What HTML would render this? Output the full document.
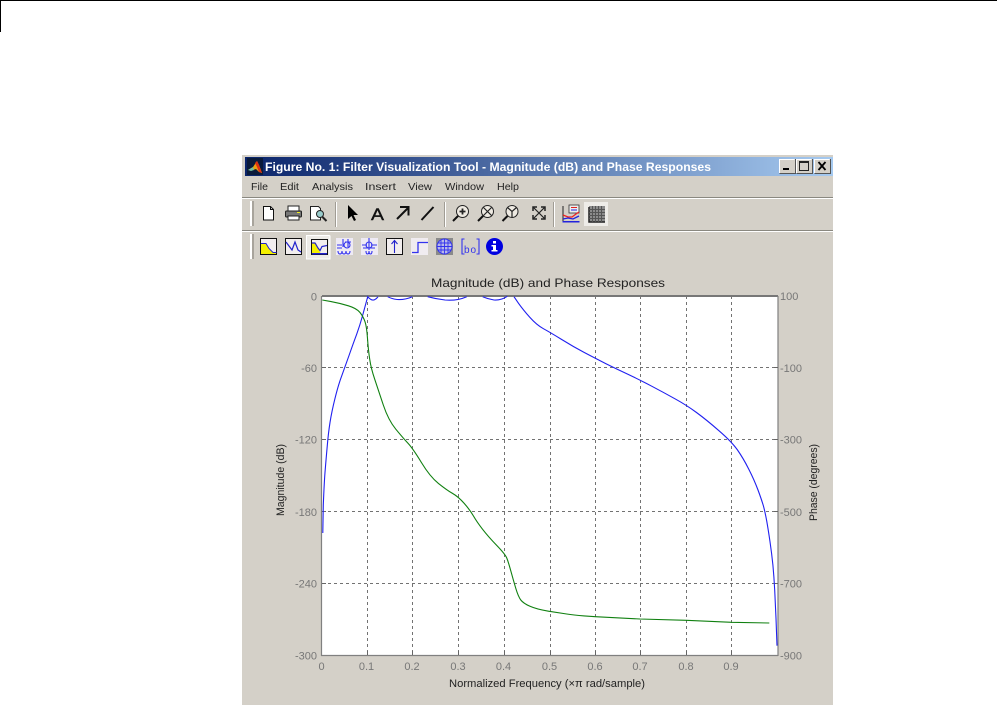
<!DOCTYPE html>
<html><head><meta charset="utf-8"><title>Filter Visualization Tool</title>
<style>html,body{margin:0;padding:0;background:#fff;width:997px;height:705px;overflow:hidden}svg{display:block}
text{font-family:"Liberation Sans",sans-serif}</style></head><body>
<svg width="997" height="705" viewBox="0 0 997 705" xmlns="http://www.w3.org/2000/svg">
<defs><linearGradient id="tb" x1="0" x2="1" y1="0" y2="0"><stop offset="0" stop-color="#0a246a"/><stop offset="1" stop-color="#a6caf0"/></linearGradient></defs>
<rect x="0" y="0" width="997" height="1" fill="#000"/>
<rect x="0" y="0" width="1" height="32" fill="#000"/>
<!-- window -->
<rect x="242" y="155" width="591" height="550" fill="#d4d0c8"/>
<rect x="245" y="157" width="588" height="19" fill="url(#tb)"/>
<!-- title icon -->
<rect x="247" y="158" width="16" height="17" fill="#0a1a3a"/>
<path d="M248 170l5-3 4-6 2 4 3 8-3-1-3-3-3 1z" fill="#e8a010"/>
<path d="M255 163l2-2 2 4 3 8-3-1-2-5z" fill="#e03010"/>
<path d="M248 170l5-3 1 3-3 1z" fill="#70c0a0"/>
<text x="265" y="171" font-size="11.500" font-weight="bold" fill="#fff" textLength="446" lengthAdjust="spacingAndGlyphs">Figure No. 1: Filter Visualization Tool - Magnitude (dB) and Phase Responses</text>
<!-- window buttons -->
<g>
<rect x="779" y="159" width="16" height="14" fill="#d4d0c8"/>
<path d="M779.500 173v-13.500h15" fill="none" stroke="#fff"/><path d="M795.500 159v14.500h-16" fill="none" stroke="#555"/>
<rect x="783" y="168" width="6" height="2" fill="#000"/>
<rect x="796" y="159" width="16" height="14" fill="#d4d0c8"/>
<path d="M796.500 173v-13.500h15" fill="none" stroke="#fff"/><path d="M812.500 159v14.500h-16" fill="none" stroke="#555"/>
<path d="M799.500 161.500h9v9h-9z M799 162.500h10" fill="none" stroke="#222"/>
<rect x="814" y="159" width="16" height="14" fill="#d4d0c8"/>
<path d="M814.500 173v-13.500h15" fill="none" stroke="#fff"/><path d="M830.500 159v14.500h-16" fill="none" stroke="#555"/>
<path d="M818.500 162l7 8M825.500 162l-7 8" stroke="#000" stroke-width="1.800" fill="none"/>
</g>
<!-- menu -->
<g font-size="10.500" fill="#222">
<text x="251" y="190" textLength="17" lengthAdjust="spacingAndGlyphs">File</text>
<text x="280" y="190" textLength="19" lengthAdjust="spacingAndGlyphs">Edit</text>
<text x="312" y="190" textLength="41" lengthAdjust="spacingAndGlyphs">Analysis</text>
<text x="365" y="190" textLength="31" lengthAdjust="spacingAndGlyphs">Insert</text>
<text x="408" y="190" textLength="24" lengthAdjust="spacingAndGlyphs">View</text>
<text x="445" y="190" textLength="39" lengthAdjust="spacingAndGlyphs">Window</text>
<text x="497" y="190" textLength="22" lengthAdjust="spacingAndGlyphs">Help</text>
</g>
<!-- toolbar separators -->
<rect x="242" y="197" width="591" height="1" fill="#8a8880"/><rect x="242" y="198" width="591" height="1" fill="#fff"/>
<rect x="242" y="230" width="591" height="1" fill="#8a8880"/><rect x="242" y="231" width="591" height="1" fill="#fff"/>
<!-- grips -->
<g><rect x="250" y="201" width="2" height="25" fill="#fff"/><rect x="252" y="201" width="2" height="25" fill="#a8a49c"/>
<rect x="250" y="234" width="2" height="25" fill="#fff"/><rect x="252" y="234" width="2" height="25" fill="#a8a49c"/></g>
<g><rect x="335" y="202" width="1" height="25" fill="#a09c94"/><rect x="336" y="202" width="1" height="25" fill="#fff"/>
<rect x="444" y="202" width="1" height="25" fill="#a09c94"/><rect x="445" y="202" width="1" height="25" fill="#fff"/>
<rect x="553" y="202" width="1" height="25" fill="#a09c94"/><rect x="554" y="202" width="1" height="25" fill="#fff"/></g>
<!-- toolbar 1 icons -->
<path d="M263.500 206.500h7l3 3v10.500h-10z" fill="#fff" stroke="#111"/><path d="M270.500 206.500v3h3" fill="none" stroke="#111"/>
<g><rect x="288" y="206" width="11" height="5" fill="#fff" stroke="#222"/><rect x="285.500" y="211" width="16" height="6" rx="1" fill="#777" stroke="#222"/><rect x="288" y="216" width="11" height="4" fill="#fff" stroke="#222"/><rect x="297" y="212" width="3" height="1" fill="#ee2"/></g>
<path d="M310.500 206.500h8l2 2v11.500h-10z" fill="#fff" stroke="#222"/><circle cx="320" cy="214" r="3.500" fill="#9cc" stroke="#222"/><path d="M322.500 217l4 4" stroke="#222" stroke-width="2"/>
<path d="M348 205v14l3.500-3 2.500 5 2-1-2.500-5h4.500z" fill="#000"/>
<text x="371" y="220" font-size="17" fill="#111" stroke="#111" stroke-width=".4" textLength="13" lengthAdjust="spacingAndGlyphs">A</text>
<path d="M397 219l11-11M400 207h8.500v8.500" fill="none" stroke="#111" stroke-width="2"/>
<path d="M421.500 220l12-13" stroke="#111" stroke-width="2"/>
<g fill="#eeeae2" stroke="#222"><circle cx="462.500" cy="211.500" r="6"/><circle cx="487.500" cy="211.500" r="6"/><circle cx="512" cy="211.500" r="6"/></g>
<g fill="none" stroke="#111" stroke-width="2"><path d="M458 216l-5 5M483 216l-5 5M507.500 216l-5 5"/></g>
<g fill="none" stroke="#222" stroke-width="1.200"><path d="M459.500 211.500h6M462.500 208.500v6" stroke-width="1.800"/><path d="M483.500 207.500l8 8M491.500 207.500l-8 8"/><path d="M507.500 207.500l4.500 4 4.500-4M512 211.500v6"/>
<path d="M533 207l12 12M545 207l-12 12"/><path d="M533 211v-4h4M541 207h4v4M545 215v4h-4M537 219h-4v-4" stroke-width="1.500"/></g>
<g><rect x="562.500" y="206" width="1" height="16" fill="#222"/><rect x="562.500" y="221" width="17" height="1.500" fill="#22d"/><rect x="569" y="205" width="10" height="8" fill="#eee" stroke="#333" stroke-width=".8"/><path d="M571 207.500h6" stroke="#d22"/><path d="M571 210h6" stroke="#22d"/><path d="M563 215l5 2 4 0 4-3 3-2" stroke="#e22" stroke-width="1.300" fill="none"/><path d="M563 219l5-1 5 1 6-3" stroke="#22d" stroke-width="1.300" fill="none"/></g>
<g><rect x="584" y="202" width="24" height="24" fill="#eeece8"/><rect x="589" y="206" width="16" height="16" fill="#8c8c8c"/><path d="M589 207v15h16" fill="none" stroke="#222" stroke-width="1.500"/><path d="M589 209.500h16M589 212.500h16M589 215.500h16M589 218.500h16M592.500 206v16M595.500 206v16M598.500 206v16M601.500 206v16" stroke="#555" stroke-width="1"/></g>
<!-- toolbar 2 icons -->
<g>
<rect x="260.500" y="238.500" width="16" height="16" fill="#f2eeee" stroke="#111"/><path d="M261 244h5l3 5 4 4h3v1h-15z" fill="#f4f000"/><path d="M261 243.500h5l3 5 4 4h3.500" fill="none" stroke="#22c"/>
<rect x="285.500" y="238.500" width="16" height="16" fill="#f2eeee" stroke="#111"/><path d="M286 242l6 8 3-8 3 8 3 2" fill="none" stroke="#22c" stroke-width="1.200"/>
<rect x="306" y="235" width="24" height="24" fill="#eeece8"/><path d="M306.500 259v-23.500h23M330 235.500v23.500h-24" fill="none" stroke="#fff"/>
<rect x="311.500" y="239.500" width="16" height="15" fill="#f2eeee" stroke="#111"/><path d="M312 243h4l3 7 2 4h-9z" fill="#f4f000"/><path d="M312 243h3l3 5 2 2.500 2-4 5-1" fill="none" stroke="#22c" stroke-width="1.200"/><rect x="312" y="253" width="15" height="1.500" fill="#22c"/>
<rect x="336" y="238" width="17" height="17" fill="#eeeaf4"/><path d="M337 245h5M337 248h5M343 239v8M348 239v8M345 242h6M338 251c0 4 4 4 4 0c0 4 4 4 4 0c0 4 4 4 4 0M344 245a2 2 0 1 0 6 0a2 2 0 1 0-6 0" fill="none" stroke="#33e" stroke-width="1.100"/>
<rect x="361" y="238" width="17" height="17" fill="#eeeaf4"/><path d="M362 245h5M369 238v12M366 245a3 3 0 1 0 6 0a3 3 0 1 0-6 0M371 245h6M363 248h12M366 251c0 4 3 4 3 0c0 4 3 4 3 0" fill="none" stroke="#33e" stroke-width="1.100"/>
<rect x="386.500" y="238.500" width="16" height="16" fill="#f2eeee" stroke="#111"/><path d="M394.500 253v-12M391.500 244l3-3.500 3 3.500" fill="none" stroke="#22c" stroke-width="1.100"/>
<rect x="411" y="238" width="17" height="17" fill="#f0ecf0"/><path d="M412 252.500h6v-10h10" fill="none" stroke="#33e" stroke-width="1.300"/>
<rect x="436" y="238" width="17" height="17" fill="#8a8a8a"/><circle cx="444.500" cy="246.500" r="7.500" fill="#b8b8e8" stroke="#33e"/><path d="M437 246.500h15M444.500 239v15M441 240v13M448 240v13M438 243h13M438 250h13" stroke="#33e" stroke-width=".9" fill="none"/>
<path d="M464.500 239h-2.500v15h2.500M476.500 239h2.500v15h-2.500" fill="none" stroke="#33e" stroke-width="1.100"/><text x="464" y="253" font-size="10" fill="#33e" textLength="12">bo</text>
<circle cx="494.500" cy="246.500" r="8.500" fill="#0000e0"/><rect x="493" y="241" width="3" height="2.500" fill="#fff"/><path d="M491.500 245h4.500v5h1.500v1.500h-6v-1.500h1.500v-3.500h-1.500z" fill="#fff"/>
</g>
<!-- plot -->
<rect x="322" y="296" width="456" height="360" fill="#fff"/>
<g stroke="#444" stroke-width="1" stroke-dasharray="3 3" fill="none" shape-rendering="crispEdges" opacity=".75">
<path d="M367.500 296V655M412.500 296V655M458.500 296V655M504.500 296V655M550.500 296V655M595.500 296V655M640.500 296V655M686.500 296V655M731.500 296V655"/>
<path d="M322 367.500H778M322 439.500H778M322 511.500H778M322 583.500H778"/>
</g>
<path d="M322 296.500H778M322 295.500H778" stroke="#777" stroke-width="1" fill="none"/>
<path d="M321.500 296V656M778 296V656M321 655.500H778" stroke="#808080" stroke-width="1.200" fill="none"/>
<!-- ticks -->
<path d="M367.500 655v-4M412.500 655v-4M458.500 655v-4M504.500 655v-4M550.500 655v-4M595.500 655v-4M640.500 655v-4M686.500 655v-4M731.500 655v-4M322 367.500h4M322 439.500h4M322 511.500h4M322 583.500h4M778 367.500h-4M778 439.500h-4M778 511.500h-4M778 583.500h-4" stroke="#666" fill="none"/>
<!-- curves -->
<path d="M322.800 533L323.300 505Q324.300 480 325.200 470Q326 460 327.200 446.600Q328.300 433.300 330 422.500Q331.700 411.700 335 398.400Q338.300 385 341.700 375.900Q345 366.700 349.200 355Q353.300 343.300 356.700 334.200Q360 325 362.500 315.900L367.700 296.700Q371.700 301 374.500 299.800Q376.500 299 378 296.700M387.700 296.700Q392 299 397 299.500Q405 300 412.300 296.700M427.700 296.700Q436 299 445 300Q457 301 466.700 296.700M482.700 296.700Q488 299 494 300Q501 300.500 507.300 296.300M514 296.700L518.600 303.400Q523.300 310 530 317.500Q536.700 325 543.400 328.700Q550 332.300 561.700 339.500Q573.300 346.700 584.300 352.500Q595.300 358.300 606 363.700Q616.700 369 628.400 374.500Q640 380 651.700 386.200Q663.300 392.300 674.800 398.700Q686.300 405 696.500 412.500Q706.700 420 719.200 430.900Q731.700 441.700 737.500 450Q743.300 458.300 748.800 469.200Q754.300 480 758 490Q761.700 500 763.400 505.900Q765 511.700 766.700 520.900Q768.300 530 770 541.700Q771.700 553.300 772.900 565Q774 576.700 774.700 590Q775.300 603.300 776 618.300L777 645.700" fill="none" stroke="#2020f0" stroke-width="1.100"/>
<path d="M322.300 300L331 301.600Q340 303.300 348.400 305.800Q356.700 308.300 360 312.500Q363.300 316.700 365 321.700Q366.700 326.700 367.500 338.400Q368.300 350 369.700 359.200Q371 368.300 374.700 379.200Q378.300 390 383.300 405Q388.300 420 395.800 429.200Q403.300 438.300 408 443.300Q412.700 448.300 421.400 462.500Q430 476.700 438.400 483.400Q446.700 490 452.500 493.400Q458.300 496.700 464.200 503.400Q470 510 473.400 515.900Q476.700 521.700 482.500 529.200Q488.300 536.700 496.700 545.400Q505 554 506.700 557.900Q508.300 561.700 510.800 570.900Q513.300 580 515.800 588.400Q518.300 596.700 520.800 600Q523.300 603.300 530 606.300Q536.700 609.300 548.400 611.200Q560 613 566.700 614Q573.300 615 584.300 615.900L595.300 616.700L640 619L686.300 620.300L731.700 622.300L769.300 623" fill="none" stroke="#108010" stroke-width="1.100"/>
<!-- labels -->
<g font-size="11" fill="#777">
<g text-anchor="end"><text x="317" y="300.500">0</text><text x="317" y="372">-60</text><text x="317" y="443.500">-120</text><text x="317" y="516">-180</text><text x="317" y="587.500">-240</text><text x="317" y="659.500">-300</text></g>
<text x="780" y="300">100</text><text x="780" y="372">-100</text><text x="780" y="443.500">-300</text><text x="780" y="516">-500</text><text x="780" y="587.500">-700</text><text x="780" y="659.500">-900</text>
<g text-anchor="middle"><text x="321.500" y="670">0</text><text x="366.500" y="670">0.1</text><text x="412" y="670">0.2</text><text x="458" y="670">0.3</text><text x="503.500" y="670">0.4</text><text x="549.500" y="670">0.5</text><text x="595" y="670">0.6</text><text x="640" y="670">0.7</text><text x="686" y="670">0.8</text><text x="731" y="670">0.9</text></g>
</g>
<text x="431" y="287" font-size="12" fill="#222" textLength="234" lengthAdjust="spacingAndGlyphs">Magnitude (dB) and Phase Responses</text>
<text x="449" y="687" font-size="11" fill="#222" textLength="196" lengthAdjust="spacingAndGlyphs">Normalized Frequency (×π rad/sample)</text>
<text transform="translate(284,516) rotate(-90)" font-size="11" fill="#222" textLength="72" lengthAdjust="spacingAndGlyphs">Magnitude (dB)</text>
<text transform="translate(817,521) rotate(-90)" font-size="11" fill="#222" textLength="77" lengthAdjust="spacingAndGlyphs">Phase (degrees)</text>
</svg>
</body></html>
